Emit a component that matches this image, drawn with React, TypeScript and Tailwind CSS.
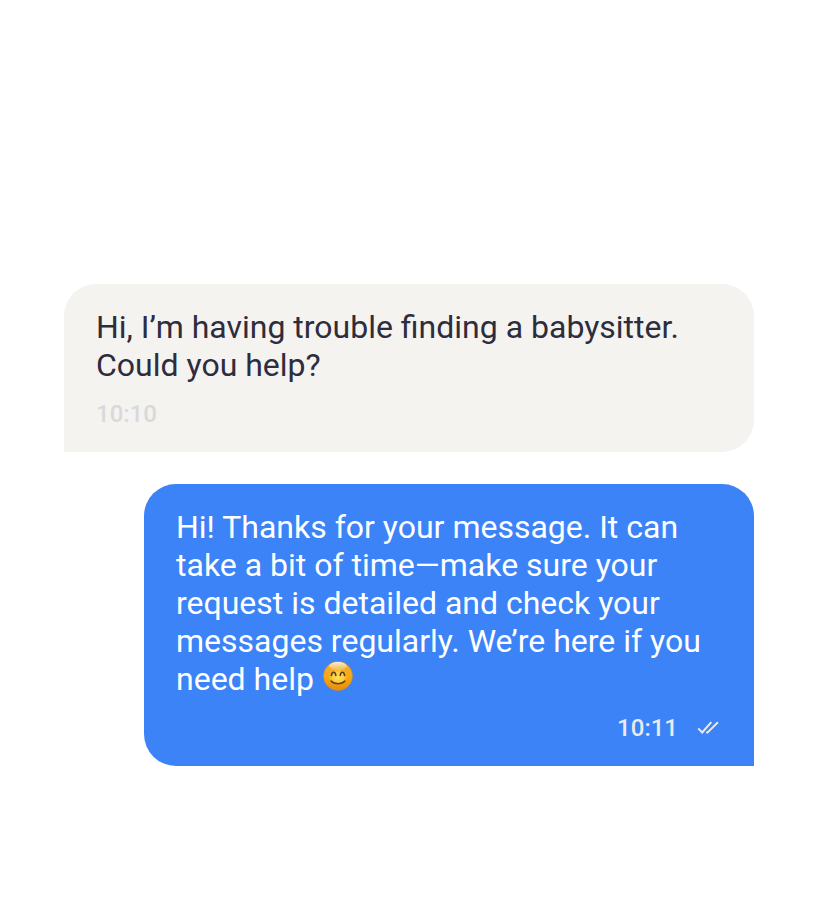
import type { ReactNode } from "react";
import clsx from "clsx";

interface BubbleProps {
  outgoing?: boolean;
  time: string;
  children: ReactNode;
}

function ReadReceipt() {
  return (
    <svg
      viewBox="0 0 28 28"
      role="img"
      aria-label="Read"
      className="h-7 w-7"
      fill="none"
      stroke="currentColor"
      strokeWidth="2"
    >
      <path d="M4.2 14.4 8.2 18.5 17.3 8.2" />
      <path d="M12.2 18.1 13.4 18.6 23.9 8.2" />
    </svg>
  );
}

function SmileEmoji() {
  return (
    <svg
      viewBox="0 0 32 32"
      role="img"
      aria-label="Smiling face"
      className="-mt-3 inline-block h-8 w-8 align-middle"
    >
      <defs>
        <linearGradient id="face" x1="0" y1="0" x2="0" y2="1">
          <stop offset="0" stopColor="#e9b040" />
          <stop offset="0.5" stopColor="#f7a916" />
          <stop offset="1" stopColor="#e88c0e" />
        </linearGradient>
        <radialGradient id="glow" cx="0.5" cy="0.5" r="0.5">
          <stop offset="0" stopColor="#ffe45c" />
          <stop offset="0.6" stopColor="#ffd544" stopOpacity="0.8" />
          <stop offset="1" stopColor="#fcb71f" stopOpacity="0" />
        </radialGradient>
        <linearGradient id="shine" x1="0" y1="0" x2="0" y2="1">
          <stop offset="0" stopColor="#f4f0e6" />
          <stop offset="1" stopColor="#fbe08a" stopOpacity="0.3" />
        </linearGradient>
      </defs>
      <circle cx="16" cy="16" r="14.5" fill="url(#face)" stroke="#d08a1c" strokeWidth="0.6" />
      <ellipse cx="16" cy="17" rx="10" ry="9" fill="url(#glow)" />
      <ellipse cx="16" cy="6" rx="8.8" ry="4" fill="url(#shine)" />
      <g fill="none" stroke="#5f3d1c" strokeLinecap="round">
        <path d="M9.4 15.4C10 11.2 13.2 11.2 13.8 15.4" strokeWidth="1.7" />
        <path d="M18.2 15.4C18.8 11.2 22 11.2 22.6 15.4" strokeWidth="1.7" />
        <path d="M9 21C12.2 24.6 19.8 24.6 23 21" strokeWidth="1.4" />
      </g>
    </svg>
  );
}

function Bubble({ outgoing = false, time, children }: BubbleProps) {
  return (
    <li
      className={clsx(
        "flex flex-col gap-4 rounded-t-4xl px-8 py-6",
        outgoing
          ? "ml-20 rounded-bl-4xl bg-[#3b83f7] text-white"
          : "rounded-br-4xl bg-[#f5f3f0] text-[#2d2d3d]",
      )}
    >
      <p className="text-[32px] leading-[38px]">{children}</p>
      <div
        className={clsx(
          "flex items-center gap-4 text-2xl leading-7 font-medium",
          outgoing ? "justify-end text-[#e8eaed]" : "text-[#d9d9db]",
        )}
      >
        <time>{time}</time>
        {outgoing && <ReadReceipt />}
      </div>
    </li>
  );
}

export default function App() {
  return (
    <main className="min-h-screen bg-white pt-[284px] pr-[78px] pb-16 pl-16 font-[Roboto,sans-serif]">
      <ul className="flex flex-col gap-8">
        <Bubble time="10:10">
          Hi, I’m having trouble finding a babysitter. Could you help?
        </Bubble>
        <Bubble outgoing time="10:11">
          Hi! Thanks for your message. It can take a bit of time—make sure your request is detailed
          and check your messages regularly. We’re here if you need help <SmileEmoji />
        </Bubble>
      </ul>
    </main>
  );
}
